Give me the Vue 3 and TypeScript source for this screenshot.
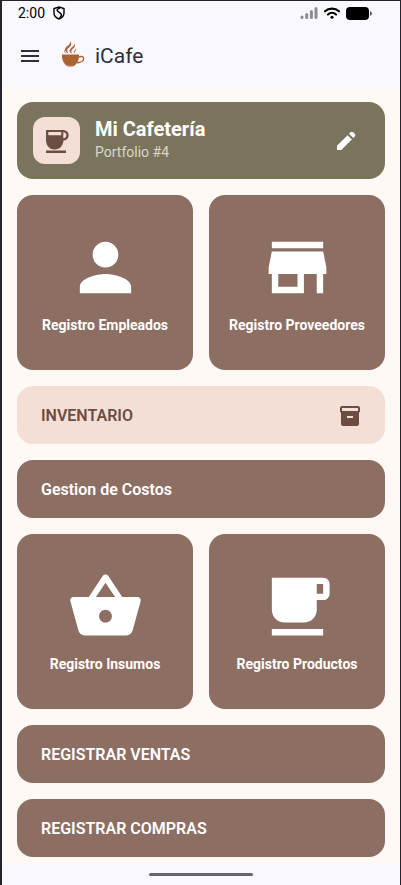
<script setup lang="ts">
interface Tile {
  label: string
  icon: string
}

const people: Tile[] = [
  {
    label: 'Registro Empleados',
    icon: 'M12 12c2.21 0 4-1.79 4-4s-1.79-4-4-4-4 1.79-4 4 1.79 4 4 4zm0 2c-2.67 0-8 1.34-8 4v2h16v-2c0-2.66-5.33-4-8-4z',
  },
  {
    label: 'Registro Proveedores',
    icon: 'M20 4H4v2h16V4zm1 10v-2l-1-5H4l-1 5v2h1v6h10v-6h4v6h2v-6h1zm-9 4H6v-4h6v4z',
  },
]

const goods: Tile[] = [
  {
    label: 'Registro Insumos',
    icon: 'M17.21 9l-4.38-6.56c-.19-.28-.51-.42-.83-.42-.32 0-.64.14-.83.43L6.79 9H2c-.55 0-1 .45-1 1 0 .09.01.18.04.27l2.54 9.27c.23.84 1 1.46 1.92 1.46h13c.92 0 1.69-.62 1.93-1.46l2.54-9.27L23 10c0-.55-.45-1-1-1h-4.79zM9 9l3-4.4L15 9H9zm3 8c-1.1 0-2-.9-2-2s.9-2 2-2 2 .9 2 2-.9 2-2 2z',
  },
  {
    label: 'Registro Productos',
    icon: 'M20 3H4v10c0 2.21 1.79 4 4 4h6c2.21 0 4-1.79 4-4v-3h2c1.11 0 2-.9 2-2V5c0-1.11-.89-2-2-2zm0 5h-2V5h2v3zM4 19h16v2H4z',
  },
]

const records: string[] = ['REGISTRAR VENTAS', 'REGISTRAR COMPRAS']
</script>

<template>
  <div class="screen">
    <div class="status">
      <span class="clock">2:00</span>
      <svg class="shield" viewBox="0 0 12 14" aria-hidden="true">
        <path d="M6 1 11 2.6V7c0 2.7-2 4.800-5 6C3 11.800 1 9.700 1 7V2.600z" />
        <path d="M7 1.600 4.400 3.400c-.8 1 .2 2 1.800 3s2.600 2 2.200 3.200L6.600 12" />
      </svg>
      <div class="indicators">
        <svg class="signal" viewBox="0 0 18 12" aria-hidden="true">
          <path d="M2 10v.6M6.700 7.500v3M11.400 4.500v6M16 1.500v9" />
        </svg>
        <svg class="wifi" viewBox="0 0 16 12" aria-hidden="true">
          <path d="M1 4.300c4-3.700 10-3.700 14 0M4 7.500c2.300-2.100 5.700-2.100 8 0" />
          <circle cx="8" cy="10.300" r="1.500" />
        </svg>
        <svg class="battery" viewBox="0 0 26 13" aria-hidden="true">
          <rect width="23" height="13" rx="4" />
          <path d="M24.300 4.200c1.700.6 1.700 4 0 4.600z" />
        </svg>
      </div>
    </div>

    <header class="topbar">
      <button class="menu" type="button" aria-label="Menú">
        <svg viewBox="0 0 18 12" aria-hidden="true">
          <path d="M0 0h18v2H0zM0 5h18v2H0zM0 10h18v2H0z" />
        </svg>
      </button>
      <svg class="logo" viewBox="0 0 24 28" aria-hidden="true">
        <path d="M1 14.500h17c.3 6-2.100 9.200-4.400 10.900H5.400C3.100 23.700.7 20.500 1 14.500z" />
        <path d="M5 25.300h9c-1 1.700-8 1.700-9 0z" />
        <path class="line" d="M17.800 17.200c2.300-1.400 4.900-.8 4.900 1.300 0 2.500-3.300 4.100-6.700 4.200" />
        <path d="M9.500 1c1.800 3.800-.2 5.500-2.300 7.300-1.500 1.300-1.400 3 .3 5.100-4-1.700-4.500-4.600-1.800-6.900C8 4.600 9.700 3.500 9.500 1z" />
        <path d="M13.600 3.600c1.300 3-.6 4.300-2.300 5.800-1.300 1.100-1.200 2.300-.2 4.100-3.200-1.300-3.300-3.500-1.200-5.300 1.900-1.600 3.600-2.300 3.700-4.600zM15 8.200c.8 2.200-1.600 2.800-1.500 5.300-1.900-1.900.9-3.200 1.500-5.300zM4.300 9.300c-1 1.400-.4 2.800 1.200 4-2.300-.7-3-2.700-1.200-4z" />
      </svg>
      <h1>iCafe</h1>
    </header>

    <main class="content">
      <section class="profile">
        <div class="avatar">
          <svg viewBox="0 0 28 28" aria-hidden="true">
            <path fill-rule="evenodd" d="M3 3h17.500a5.200 5.200 0 0 1 0 10.400c-.6 5-3.200 9-8.900 9S3 18 3 13zM5.300 5v3.300h13V5zM20.300 5.200v6c4.200.2 4.200-6.200 0-6zM3 23.600h20V26H3z" />
          </svg>
        </div>
        <div class="identity">
          <h2>Mi Cafetería</h2>
          <p>Portfolio #4</p>
        </div>
        <button class="edit" type="button" aria-label="Editar">
          <svg viewBox="0 0 24 24" aria-hidden="true">
            <path d="M19.300 8.925l-4.250-4.200 1.400-1.400q.575-.575 1.413-.575t1.412.575l1.400 1.400q.575.575.6 1.388t-.55 1.387L19.300 8.925ZM17.850 10.400 7.250 21H3v-4.250l10.600-10.600 4.250 4.250Z" />
          </svg>
        </button>
      </section>

      <div class="tiles">
        <button v-for="tile in people" :key="tile.label" class="tile" type="button">
          <svg viewBox="0 0 24 24" aria-hidden="true"><path :d="tile.icon" /></svg>
          <span>{{ tile.label }}</span>
        </button>
      </div>

      <button class="row light" type="button">
        <span>INVENTARIO</span>
        <svg viewBox="0 0 24 24" aria-hidden="true">
          <path d="M20 2H4c-1 0-2 .9-2 2v3.010c0 .72.43 1.340 1 1.690V20c0 1.100 1.100 2 2 2h14c.9 0 2-.9 2-2V8.700c.57-.35 1-.97 1-1.690V4c0-1.100-1-2-2-2zm-5 12H9v-2h6v2zm5-7H4V4h16v3z" />
        </svg>
      </button>
      <button class="row" type="button"><span>Gestion de Costos</span></button>

      <div class="tiles">
        <button v-for="tile in goods" :key="tile.label" class="tile" type="button">
          <svg viewBox="0 0 24 24" aria-hidden="true"><path :d="tile.icon" /></svg>
          <span>{{ tile.label }}</span>
        </button>
      </div>

      <button v-for="label in records" :key="label" class="row" type="button">
        <span>{{ label }}</span>
      </button>
    </main>

    <div class="gesture"><span class="pill"></span></div>
  </div>
</template>

<style>
body {
  margin: 0;
  background: #fff8f5;
}
</style>

<style scoped>
.screen {
  box-sizing: border-box;
  min-height: 100vh;
  display: flex;
  flex-direction: column;
  border: solid #24222b;
  border-width: 1px 1px 0 2px;
  background: #fff8f5;
  font-family: Roboto, sans-serif;
}

svg {
  display: block;
  flex: none;
  fill: currentColor;
}

button {
  margin: 0;
  padding: 0;
  border: 0;
  background: none;
  color: inherit;
  font: inherit;
  cursor: pointer;
}

h1,
h2,
p {
  margin: 0;
}

.status {
  display: flex;
  align-items: center;
  height: 24px;
  padding: 0 28px 0 16px;
  background: #f9f7ff;
  color: #000;
}

.clock {
  font-size: 14px;
  line-height: 24px;
}

.shield {
  width: 12px;
  height: 14px;
  margin-left: 8px;
  fill: none;
  stroke: currentColor;
  stroke-width: 1.4;
}

.indicators {
  display: flex;
  align-items: center;
  gap: 6px;
  margin-left: auto;
}

.signal {
  width: 18px;
  height: 12px;
  fill: none;
  stroke: #8e8c92;
  stroke-width: 3;
  stroke-linecap: round;
}

.wifi {
  width: 16px;
  height: 12px;
}

.wifi path {
  fill: none;
  stroke: currentColor;
  stroke-width: 2.2;
  stroke-linecap: round;
}

.battery {
  width: 26px;
  height: 13px;
}

.topbar {
  display: flex;
  align-items: center;
  height: 62px;
  padding: 0 19px;
  background: #f9f7ff;
  color: #302f38;
}

.menu svg {
  width: 18px;
  height: 12px;
}

.logo {
  width: 24px;
  height: 28px;
  margin: 0 10px 4px 22px;
  color: #aa6433;
}

.logo .line {
  fill: none;
  stroke: currentColor;
  stroke-width: 1.4;
}

h1 {
  font-size: 21px;
  font-weight: 400;
  line-height: 28px;
}

.content {
  flex: 1;
  display: flex;
  flex-direction: column;
  gap: 16px;
  padding: 15px 15px 7px;
}

.profile {
  display: flex;
  align-items: center;
  gap: 15px;
  height: 77px;
  padding: 0 27px 0 16px;
  border-radius: 16px;
  background: #7b745c;
  color: #fff;
}

.avatar {
  display: grid;
  place-items: center;
  width: 47px;
  height: 47px;
  border-radius: 12px;
  background: #f4dfd6;
  color: #6d4c41;
}

.avatar svg {
  width: 28px;
  height: 28px;
}

.identity {
  flex: 1;
  padding-bottom: 4px;
}

h2 {
  font-size: 20px;
  font-weight: 700;
  line-height: 26px;
}

.identity p {
  color: #d9d6cb;
  font-size: 14px;
  line-height: 20px;
}

.edit svg,
.row svg {
  width: 24px;
  height: 24px;
}

.tiles {
  display: grid;
  grid-template-columns: 1fr 1fr;
  gap: 16px;
}

.tile {
  display: flex;
  flex-direction: column;
  align-items: center;
  justify-content: center;
  gap: 8px;
  aspect-ratio: 176 / 175;
  border-radius: 16px;
  background: #8c6e63;
  color: #fff;
  font-size: 14px;
  font-weight: 700;
  line-height: 22px;
}

.tile svg {
  width: 77px;
  height: 77px;
}

.row {
  display: flex;
  align-items: center;
  justify-content: space-between;
  height: 58px;
  padding: 2px 23px 0 24px;
  border-radius: 16px;
  background: #8c6e63;
  color: #fff;
  font-size: 16px;
  font-weight: 600;
  line-height: 24px;
}

.row.light {
  background: #f4dfd6;
  color: #6d4c41;
}

.gesture {
  display: flex;
  justify-content: center;
  padding: 9px 0;
  background: #f9f7ff;
}

.pill {
  width: 26%;
  height: 3px;
  border-radius: 2px;
  background: #68656d;
}
</style>
